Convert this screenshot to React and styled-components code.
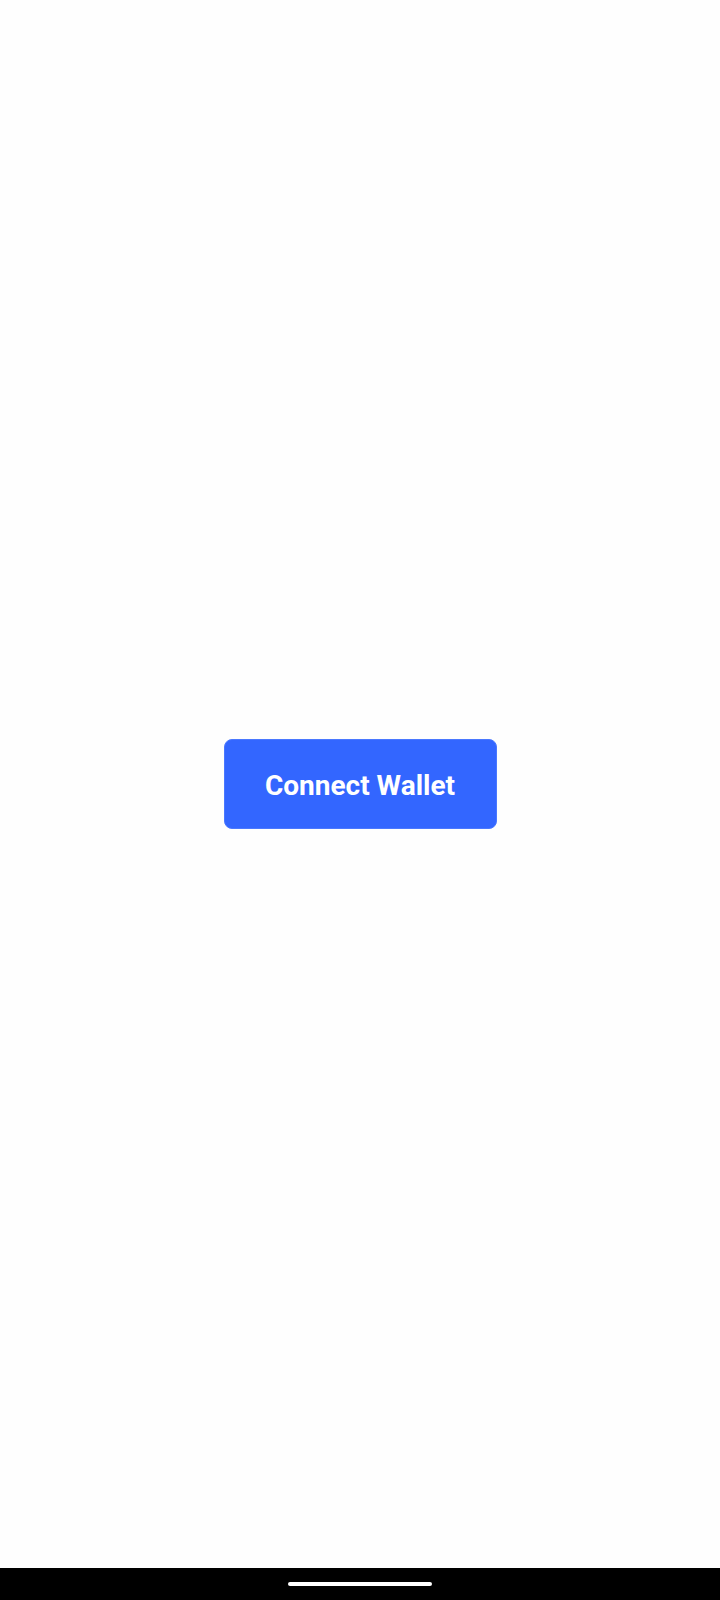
import React from 'react'
import styled, { createGlobalStyle } from 'styled-components'

const GlobalStyle = createGlobalStyle`
  html, body {
    margin: 0;
    padding: 0;
    background: #fefefe;
    font-family: Roboto, "Noto Sans", sans-serif;
  }
`

const Screen = styled.div`
  display: flex;
  flex-direction: column;
  height: 100vh;
`

const Main = styled.main`
  flex: 1;
  display: flex;
  align-items: center;
  justify-content: center;
`

const ConnectButton = styled.button`
  width: 273px;
  height: 90px;
  border: 1px solid #4a78ff;
  border-radius: 8px;
  background: #3366ff;
  color: #ffffff;
  font-family: Roboto, sans-serif;
  font-weight: 700;
  font-size: 28px;
  cursor: pointer;
  padding: 2px 0 0;
`

const NavBar = styled.div`
  height: 32px;
  background: #000;
  display: flex;
  align-items: center;
  justify-content: center;
`

const HomeIndicator = styled.div`
  width: 144px;
  height: 4px;
  border-radius: 2px;
  background: #fff;
`

export default function App() {
  return (
    <>
      <GlobalStyle />
      <Screen>
        <Main>
          <ConnectButton>Connect Wallet</ConnectButton>
        </Main>
        <NavBar>
          <HomeIndicator />
        </NavBar>
      </Screen>
    </>
  )
}
